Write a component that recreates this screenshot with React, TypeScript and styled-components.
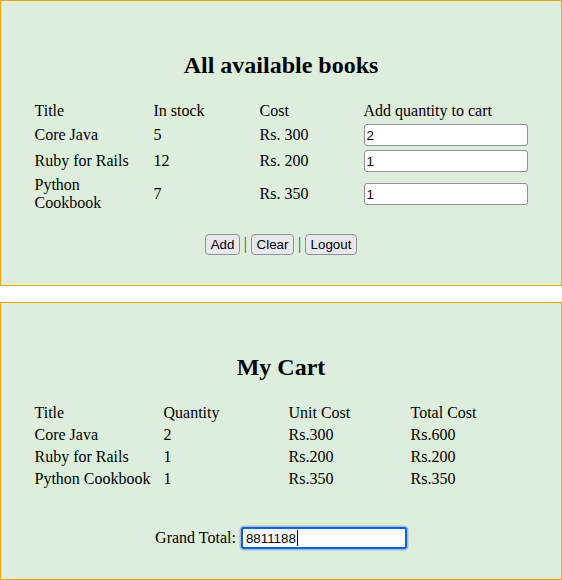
import React from "react";
import styled, { createGlobalStyle } from "styled-components";

const GlobalStyle = createGlobalStyle`
  html, body { margin: 0; padding: 0; background: #ffffff; }
  body {
    font-family: "Liberation Serif", "Times New Roman", serif;
    font-size: 16px;
    color: #000000;
  }
`;

const Page = styled.div`
  display: flex;
  flex-direction: column;
  gap: 16px;
`;

const Panel = styled.section`
  box-sizing: border-box;
  width: 100%;
  border: 1px solid #ffa500;
  background: #ddeedc;
  padding: 30px 0;
  display: flex;
  flex-direction: column;
  align-items: center;
`;

const Heading = styled.h2`
  margin: 21px 0 20px;
  font-size: 24px;
  font-weight: bold;
  line-height: normal;
`;

const Grid = styled.div<{ $cols: string; $lh: string }>`
  display: grid;
  grid-template-columns: ${(p) => p.$cols};
  column-gap: 4px;
  row-gap: 4px;
  padding: 3px;
  align-items: center;
  line-height: ${(p) => p.$lh};
`;

const Cell = styled.div`
  min-width: 0;
`;

const QtyInput = styled.input`
  box-sizing: border-box;
  width: 164px;
  height: 22px;
  margin: 0;
  padding: 0 2px;
  border: 1px solid #8f8f9d;
  border-radius: 3px;
  background: #ffffff;
  font-family: "Liberation Sans", Arial, sans-serif;
  font-size: 13.33px;
  color: #000000;
  display: block;
`;

const ButtonRow = styled.div`
  display: flex;
  align-items: center;
  gap: 4px;
  margin-top: 18.5px;
`;

const Button = styled.button`
  box-sizing: border-box;
  height: 21.5px;
  margin: 0;
  padding: 0 4.5px;
  border: 1px solid #8f8f9d;
  border-radius: 4px;
  background: #e9e9ed;
  font-family: "Liberation Sans", Arial, sans-serif;
  font-size: 13.33px;
  line-height: normal;
  color: #000000;
`;

const Sep = styled.span`
  font-size: 16px;
  line-height: 1;
  color: #444444;
`;

const TotalRow = styled.div`
  display: flex;
  align-items: center;
  gap: 5px;
  margin-top: 36px;
  height: 22px;
  line-height: 1.107;
`;

const FieldWrap = styled.span`
  position: relative;
  display: inline-flex;
`;

const TotalInput = styled.input`
  box-sizing: border-box;
  width: 166px;
  height: 22px;
  margin: 0;
  padding: 0 3px;
  border: 2px solid #0a62dd;
  border-radius: 3px;
  box-shadow: 0 0 0 1.5px #a5bdd8;
  background: #ffffff;
  font-family: "Liberation Sans", Arial, sans-serif;
  font-size: 13.33px;
  color: #000000;
  outline: none;
`;

const Caret = styled.span`
  position: absolute;
  left: 56px;
  top: 3px;
  width: 1px;
  height: 16px;
  background: #000000;
`;

const books = [
  { title: "Core Java", stock: "5", cost: "Rs. 300", qty: "2" },
  { title: "Ruby for Rails", stock: "12", cost: "Rs. 200", qty: "1" },
  { title: "Python Cookbook", stock: "7", cost: "Rs. 350", qty: "1" },
];

const cart = [
  { title: "Core Java", qty: "2", unit: "Rs.300", total: "Rs.600" },
  { title: "Ruby for Rails", qty: "1", unit: "Rs.200", total: "Rs.200" },
  { title: "Python Cookbook", qty: "1", unit: "Rs.350", total: "Rs.350" },
];

export default function App() {
  return (
    <>
      <GlobalStyle />
      <Page>
        <Panel>
          <Heading>All available books</Heading>
          <Grid $cols="115px 102px 100px 164px" $lh="normal">
            <Cell>Title</Cell>
            <Cell>In stock</Cell>
            <Cell>Cost</Cell>
            <Cell>Add quantity to cart</Cell>
            {books.map((b) => (
              <React.Fragment key={b.title}>
                <Cell>{b.title}</Cell>
                <Cell>{b.stock}</Cell>
                <Cell>{b.cost}</Cell>
                <Cell>
                  <QtyInput type="text" defaultValue={b.qty} />
                </Cell>
              </React.Fragment>
            ))}
          </Grid>
          <ButtonRow>
            <Button type="button">Add</Button>
            <Sep>|</Sep>
            <Button type="button">Clear</Button>
            <Sep>|</Sep>
            <Button type="button">Logout</Button>
          </ButtonRow>
        </Panel>
        <Panel>
          <Heading>My Cart</Heading>
          <Grid $cols="125px 121px 118px 117px" $lh="18px">
            <Cell>Title</Cell>
            <Cell>Quantity</Cell>
            <Cell>Unit Cost</Cell>
            <Cell>Total Cost</Cell>
            {cart.map((c) => (
              <React.Fragment key={c.title}>
                <Cell>{c.title}</Cell>
                <Cell>{c.qty}</Cell>
                <Cell>{c.unit}</Cell>
                <Cell>{c.total}</Cell>
              </React.Fragment>
            ))}
          </Grid>
          <TotalRow>
            <span>Grand Total:</span>
            <FieldWrap>
              <TotalInput type="text" defaultValue="8811188" readOnly />
              <Caret />
            </FieldWrap>
          </TotalRow>
        </Panel>
      </Page>
    </>
  );
}
